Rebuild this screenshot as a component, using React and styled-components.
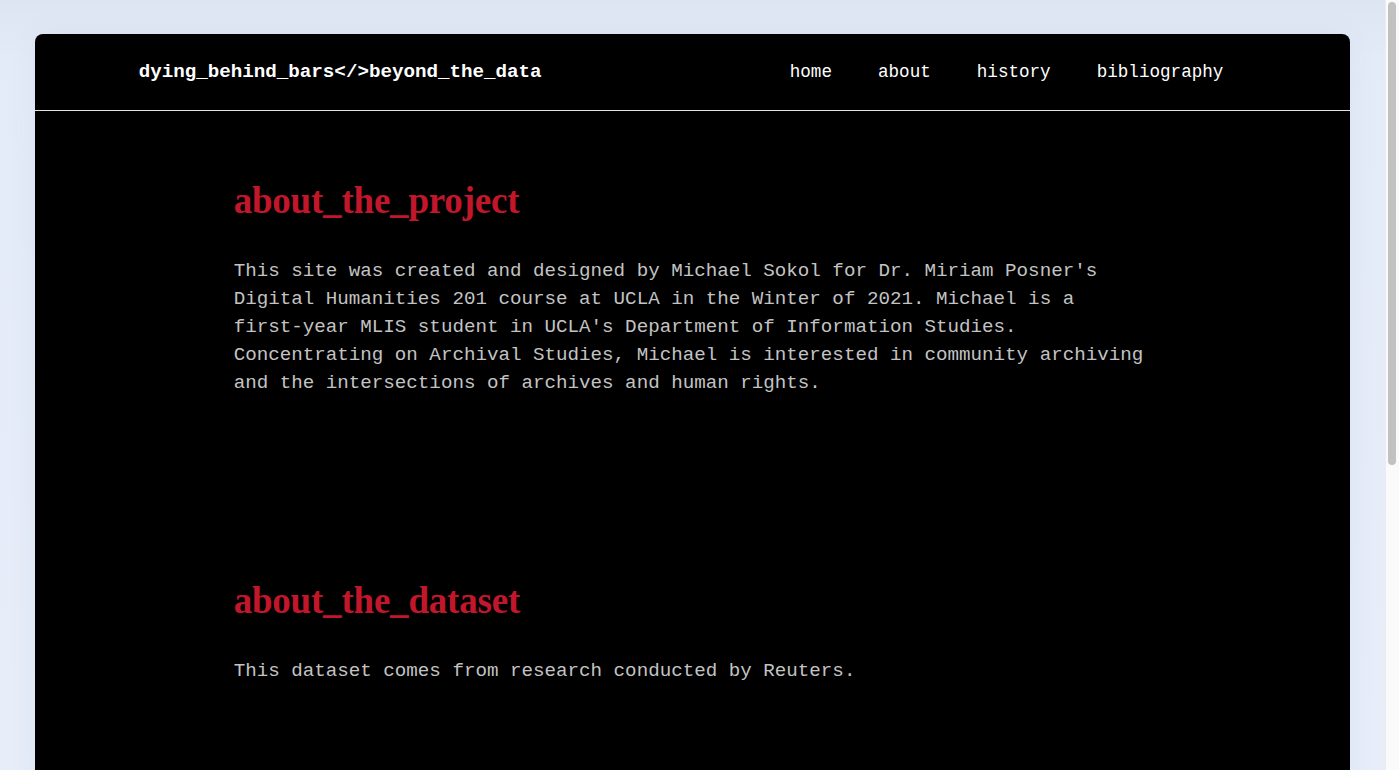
import React from 'react';
import styled, { createGlobalStyle } from 'styled-components';

const GlobalStyle = createGlobalStyle`
  body {
    margin: 0;
    font-family: "Liberation Mono", "Courier New", monospace;
    background: #e6edf9;
  }
`;

const navLinks = ['home', 'about', 'history', 'bibliography'];

const App = () => {
  return (
    <>
      <GlobalStyle />
      <LyFrame>
        <LyViewport>
          <LyCard>
            <BlHeader>
              <BlLogo>dying_behind_bars&lt;/&gt;beyond_the_data</BlLogo>
              <BlNav>
                {navLinks.map((link) => (
                  <BlNavLink key={link} href='#'>
                    {link}
                  </BlNavLink>
                ))}
              </BlNav>
            </BlHeader>
            <main>
              <BlSection>
                <BlHeading>about_the_project</BlHeading>
                <BlText>
                  This site was created and designed by Michael Sokol for Dr.
                  Miriam Posner's Digital Humanities 201 course at UCLA in the
                  Winter of 2021. Michael is a first-year MLIS student in UCLA's
                  Department of Information Studies. Concentrating on Archival
                  Studies, Michael is interested in community archiving and the
                  intersections of archives and human rights.
                </BlText>
              </BlSection>
              <BlSection last>
                <BlHeading>about_the_dataset</BlHeading>
                <BlText>This dataset comes from research conducted by Reuters.</BlText>
              </BlSection>
            </main>
          </LyCard>
        </LyViewport>
        <BlScrollTrack>
          <BlScrollThumb />
        </BlScrollTrack>
      </LyFrame>
    </>
  );
};

export default App;

const LyFrame = styled.div`
  display: flex;
  height: 100vh;
  overflow: hidden;
`;

const LyViewport = styled.div`
  flex: 1;
  min-width: 0;
  padding: 34px 0;
  background: linear-gradient(180deg, #dee5f2 0px, #e4ebf8 60px, #e7eefa 100%);
`;

const LyCard = styled.div`
  width: 95%;
  margin: 0 auto;
  background: #000;
  border-radius: 8px;
  box-shadow: 0 0 30px rgba(20, 40, 90, 0.05);
  overflow: hidden;
`;

const BlHeader = styled.header`
  height: 76px;
  padding: 0 104px;
  display: flex;
  align-items: center;
  justify-content: space-between;
  border-bottom: 1px solid #e4e4e4;
`;

const BlLogo = styled.div`
  color: #fff;
  font-size: 19.2px;
  font-weight: 700;
`;

const BlNav = styled.nav`
  display: flex;
  align-items: center;
`;

const BlNavLink = styled.a`
  color: #fff;
  font-size: 17.6px;
  padding: 0 23px;
  text-decoration: none;
`;

//セクションは固定の高さで並べる
const BlSection = styled.section`
  box-sizing: border-box;
  min-height: ${(props) => (props.last ? '735px' : '400px')};
  padding: 69px 199px 0;
`;

const BlHeading = styled.h2`
  margin: 0 0 36px;
  font-family: "Liberation Serif", "Times New Roman", serif;
  font-size: 37px;
  font-weight: 700;
  line-height: 41px;
  color: #c2172b;
  letter-spacing: -0.2px;
`;

const BlText = styled.p`
  margin: 0;
  font-size: 19.2px;
  line-height: 28px;
  color: #c3c3c3;
`;

//ブラウザのスクロールバー
const BlScrollTrack = styled.div`
  width: 14px;
  box-sizing: border-box;
  padding: 2px 3px 0 2px;
  background: #fafafa;
  border-left: 1px solid #ececec;
`;

const BlScrollThumb = styled.div`
  height: 463px;
  background: #c1c1c1;
  border-radius: 4px;
`;
